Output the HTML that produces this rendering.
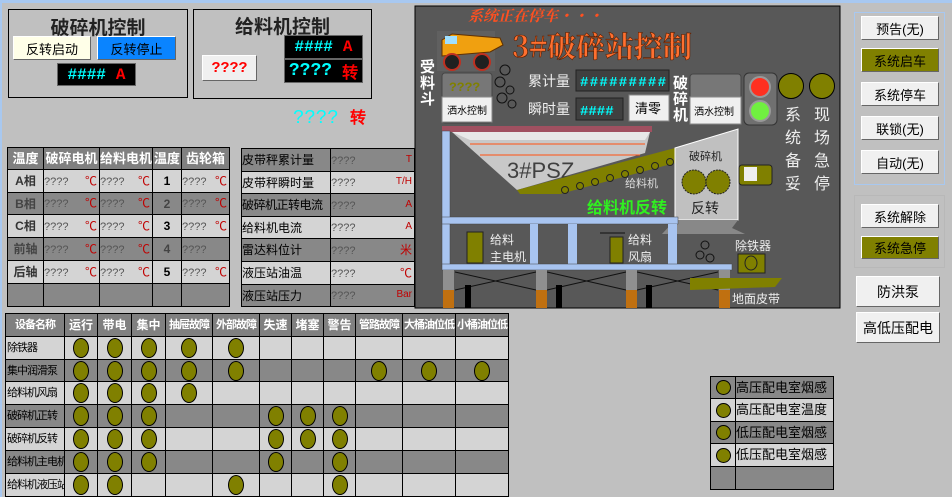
<!DOCTYPE html>
<html><head><meta charset="utf-8"><style>
*{margin:0;padding:0;box-sizing:border-box}
body{width:952px;height:497px;background:#c0c0c0;position:relative;overflow:hidden;font-family:"Liberation Sans","Noto Sans CJK SC","WenQuanYi Zen Hei",sans-serif;font-size:13px}
.a{position:absolute}
.box{position:absolute;border:1px solid #000}
.btn{position:absolute;display:flex;align-items:center;justify-content:center;border:1px solid;border-color:#fff #666 #666 #fff;background:#f0f0f0;font-size:13px;color:#000}
.disp{position:absolute;background:#000;border:1px solid #666;font-family:"Liberation Mono",monospace;font-weight:bold;display:flex;align-items:center;justify-content:center;gap:10px}
.cy{color:#00ffff}.rd{color:#ff0000}
table{border-collapse:collapse;position:absolute;table-layout:fixed}
td{border:1px solid #000;padding:0;font-size:12px;overflow:hidden;white-space:nowrap;line-height:14px}
.h td{background:#808080;color:#fff;font-weight:bold;text-align:center;font-size:13px}
.l td{background:#d4d4d4}.d td{background:#888}
.dot{display:inline-block;width:16px;height:20px;border-radius:50%;background:#808000;border:1px solid #000;vertical-align:middle}
.c{text-align:center}
.q{color:#555;font-size:11px}
.u{color:#c00000;font-size:12px;float:right;margin-right:2px}
.bt .h td{font-size:12px}
.bt .h td.k{font-size:11px;letter-spacing:-1px}
.bt td.n{text-align:left;padding-left:1px;font-size:11px;letter-spacing:-1px}
</style></head><body>
<div class="a" style="left:0;top:0;width:952px;height:3px;background:#a8c8f0"></div>
<div class="a" style="left:0;top:0;width:2px;height:497px;background:#a8c8f0"></div>

<div class="box" style="left:8px;top:9px;width:180px;height:89px"></div>
<div class="a" style="left:8px;top:13px;width:180px;text-align:center;font-size:19px;font-weight:bold;color:#222">破碎机控制</div>
<div class="btn" style="left:13px;top:36px;width:78px;height:24px;background:#ffffe8">反转启动</div>
<div class="btn" style="left:97px;top:36px;width:79px;height:24px;background:#0a84ff">反转停止</div>
<div class="disp" style="left:57px;top:63px;width:79px;height:23px;font-size:16px"><span class="cy">####</span><span class="rd">A</span></div>

<div class="box" style="left:193px;top:9px;width:179px;height:90px"></div>
<div class="a" style="left:193px;top:12px;width:179px;text-align:center;font-size:19px;font-weight:bold;color:#222">给料机控制</div>
<div class="btn" style="left:202px;top:55px;width:55px;height:26px;font-family:'Liberation Mono',monospace;font-weight:bold;color:#f00;font-size:15px">????</div>
<div class="disp" style="left:284px;top:35px;width:79px;height:24px;font-size:16px"><span class="cy">####</span><span class="rd">A</span></div>
<div class="disp" style="left:284px;top:59px;width:79px;height:24px;font-size:18px"><span class="cy">????</span><span class="rd" style="font-size:16px">转</span></div>
<div class="a" style="left:293px;top:104px;font-size:19px;font-family:'Liberation Mono',monospace"><span style="color:#00ffff">????</span> <span style="color:#f00;font-size:16px;font-weight:bold">转</span></div>

<table style="left:7px;top:147px;width:222px">
<colgroup><col style="width:36px"><col style="width:56px"><col style="width:53px"><col style="width:29px"><col style="width:48px"></colgroup>
<tr class="h" style="height:22px"><td>温度</td><td>破碎电机</td><td>给料电机</td><td>温度</td><td>齿轮箱</td></tr>
<tr class="l" style="height:23px"><td class="c" style="font-weight:bold;color:#333">A相</td><td><span class="q">????</span><span class="u">℃</span></td><td><span class="q">????</span><span class="u">℃</span></td><td class="c"><b>1</b></td><td><span class="q">????</span><span class="u">℃</span></td></tr>
<tr class="d" style="height:22px"><td class="c" style="font-weight:bold;color:#444">B相</td><td><span class="q">????</span><span class="u">℃</span></td><td><span class="q">????</span><span class="u">℃</span></td><td class="c" style="color:#444"><b>2</b></td><td><span class="q">????</span><span class="u">℃</span></td></tr>
<tr class="l" style="height:23px"><td class="c" style="font-weight:bold;color:#333">C相</td><td><span class="q">????</span><span class="u">℃</span></td><td><span class="q">????</span><span class="u">℃</span></td><td class="c"><b>3</b></td><td><span class="q">????</span><span class="u">℃</span></td></tr>
<tr class="d" style="height:23px"><td class="c" style="font-weight:bold;color:#444">前轴</td><td><span class="q">????</span><span class="u">℃</span></td><td><span class="q">????</span><span class="u">℃</span></td><td class="c" style="color:#444"><b>4</b></td><td><span class="q">????</span></td></tr>
<tr class="l" style="height:23px"><td class="c" style="font-weight:bold;color:#333">后轴</td><td><span class="q">????</span><span class="u">℃</span></td><td><span class="q">????</span><span class="u">℃</span></td><td class="c"><b>5</b></td><td><span class="q">????</span><span class="u">℃</span></td></tr>
<tr class="d" style="height:23px"><td></td><td></td><td></td><td></td><td></td></tr>
</table>

<table style="left:241px;top:148px;width:173px">
<colgroup><col style="width:89px"><col style="width:84px"></colgroup>
<tr class="d" style="height:23px"><td style="font-size:12px">皮带秤累计量</td><td><span class="q">????</span><span class="u" style="font-size:10px">T</span></td></tr>
<tr class="l" style="height:22px"><td style="font-size:12px">皮带秤瞬时量</td><td><span class="q">????</span><span class="u" style="font-size:10px">T/H</span></td></tr>
<tr class="d" style="height:23px"><td style="font-size:12px;letter-spacing:-0.5px">破碎机正转电流</td><td><span class="q">????</span><span class="u" style="font-size:10px">A</span></td></tr>
<tr class="l" style="height:22px"><td style="font-size:12px">给料机电流</td><td><span class="q">????</span><span class="u" style="font-size:10px">A</span></td></tr>
<tr class="d" style="height:23px"><td style="font-size:12px">雷达料位计</td><td><span class="q">????</span><span class="u">米</span></td></tr>
<tr class="l" style="height:23px"><td style="font-size:12px">液压站油温</td><td><span class="q">????</span><span class="u">℃</span></td></tr>
<tr class="d" style="height:22px"><td style="font-size:12px">液压站压力</td><td><span class="q">????</span><span class="u" style="font-size:10px">Bar</span></td></tr>
</table>

<svg class="a" style="left:0;top:0" width="952" height="497" viewBox="0 0 952 497">
<rect x="415" y="6" width="425" height="302" fill="#585858" stroke="#000"/>
<text x="468" y="21" font-size="15" font-weight="bold" fill="#ff5020" font-family="Noto Serif CJK SC,serif" font-style="italic">系统正在停车・・・</text>
<text x="512" y="57" font-size="29" font-weight="bold" fill="#ff7030" stroke="#602000" stroke-width="0.6" font-family="Noto Serif CJK SC,serif">3#破碎站控制</text>
<rect x="437" y="31" width="58" height="40" fill="#606060"/>
<polygon points="442,40 452,34 500,38 503,45 490,52 442,56" fill="#f0a010" stroke="#603000"/>
<rect x="445" y="36" width="12" height="8" fill="#a0e0ff"/>
<circle cx="452" cy="62" r="8" fill="#202020" stroke="#c03020" stroke-width="2"/>
<circle cx="482" cy="62" r="8" fill="#202020" stroke="#c03020" stroke-width="2"/>
<g fill="#fff" font-size="15" font-weight="bold"><text x="420" y="72">受</text><text x="420" y="88">料</text><text x="420" y="104">斗</text></g>
<g fill="none" stroke="#111" stroke-width="1"><circle cx="505" cy="70" r="5"/><circle cx="500" cy="82" r="5"/><circle cx="510" cy="90" r="4"/><circle cx="502" cy="98" r="5"/><circle cx="512" cy="104" r="4"/></g>
<rect x="442" y="73" width="50" height="50" rx="3" fill="#777" stroke="#444"/>
<text x="449" y="91" font-size="13" fill="#808000" font-family="Liberation Mono,monospace" font-weight="bold">????</text>
<rect x="442" y="97" width="50" height="25" fill="#f0f0f0" stroke="#888"/>
<text x="447" y="114" font-size="10" fill="#000">洒水控制</text>
<text x="528" y="86" font-size="14" fill="#eee">累计量</text>
<rect x="576" y="70" width="93" height="21" fill="#404040" stroke="#222"/>
<text x="580" y="86" font-size="14" font-weight="bold" fill="#00ffff" font-family="Liberation Mono,monospace" textLength="86">#########</text>
<text x="528" y="114" font-size="14" fill="#eee">瞬时量</text>
<rect x="576" y="98" width="47" height="22" fill="#404040" stroke="#222"/>
<text x="580" y="115" font-size="14" font-weight="bold" fill="#00ffff" font-family="Liberation Mono,monospace">####</text>
<rect x="629" y="95" width="40" height="26" fill="#f0f0f0" stroke="#888"/>
<text x="635" y="113" font-size="13" fill="#000">清零</text>
<g fill="#fff" font-size="15" font-weight="bold"><text x="673" y="88">破</text><text x="673" y="104">碎</text><text x="673" y="120">机</text></g>
<rect x="690" y="74" width="51" height="50" rx="3" fill="#777" stroke="#444"/>
<rect x="690" y="97" width="51" height="27" fill="#f0f0f0" stroke="#888"/>
<text x="694" y="115" font-size="10" fill="#000">洒水控制</text>
<rect x="744" y="73" width="33" height="52" rx="5" fill="#707070" stroke="#333"/>
<circle cx="760" cy="87" r="10" fill="#ff3020" stroke="#999" stroke-width="2"/>
<circle cx="760" cy="111" r="10" fill="#70f040" stroke="#999" stroke-width="2"/>
<circle cx="791" cy="86" r="12.5" fill="#808000" stroke="#000"/>
<circle cx="822" cy="86" r="12.5" fill="#808000" stroke="#000"/>
<g fill="#eee" font-size="16"><text x="785" y="120">系</text><text x="785" y="143">统</text><text x="785" y="166">备</text><text x="785" y="189">妥</text>
<text x="814" y="120">现</text><text x="814" y="143">场</text><text x="814" y="166">急</text><text x="814" y="189">停</text></g>
<rect x="442" y="126" width="210" height="6" fill="#a05060"/>
<polygon points="452,132 650,132 645,153 517,190" fill="#c8c8c8"/>
<polygon points="452,132 650,132 645,140 470,140" fill="#e8e8e8"/>
<g stroke="#ff5010" stroke-width="1"><line x1="470" y1="144" x2="645" y2="144"/><line x1="480" y1="155" x2="640" y2="155"/></g>
<text x="507" y="178" font-size="22" fill="#404040">3#PSZ</text>
<polygon points="517,190 675,148 675,163 560,194 520,194" fill="#808000"/>
<g fill="#808000" stroke="#222"><circle cx="565" cy="190" r="3.5"/><circle cx="580" cy="186" r="3.5"/><circle cx="595" cy="182" r="3.5"/><circle cx="610" cy="178" r="3.5"/><circle cx="625" cy="174" r="3.5"/><circle cx="640" cy="170" r="3.5"/><circle cx="655" cy="166" r="3.5"/><circle cx="670" cy="162" r="3.5"/></g>
<text x="625" y="187" font-size="11" fill="#ddd">给料机</text>
<text x="587" y="213" font-size="16" font-weight="bold" fill="#30f020">给料机反转</text>
<polygon points="675,148 738,129 738,220 675,220" fill="#c0c0c0" stroke="#fff"/>
<text x="689" y="160" font-size="11" fill="#222">破碎机</text>
<circle cx="694" cy="182" r="12" fill="#808000" stroke="#222" stroke-dasharray="2 1"/>
<circle cx="718" cy="182" r="12" fill="#808000" stroke="#222" stroke-dasharray="2 1"/>
<text x="691" y="213" font-size="14" fill="#222">反转</text>
<rect x="739" y="165" width="33" height="20" rx="3" fill="#808000" stroke="#222"/>
<rect x="744" y="167" width="13" height="14" fill="#eee"/>
<polygon points="675,220 738,220 732,228 745,234 662,234" fill="#888"/>
<rect x="442" y="131" width="8" height="136" fill="#a8c4f0" stroke="#444" stroke-width="0.5"/>
<rect x="442" y="217" width="236" height="7" fill="#a8c4f0" stroke="#444" stroke-width="0.5"/>
<rect x="530" y="224" width="8" height="40" fill="#a8c4f0"/>
<rect x="568" y="224" width="9" height="40" fill="#a8c4f0"/>
<rect x="668" y="224" width="9" height="40" fill="#a8c4f0"/>
<rect x="442" y="264" width="290" height="6" fill="#a8c4f0" stroke="#444" stroke-width="0.5"/>
<rect x="467" y="232" width="16" height="31" fill="#808000" stroke="#222"/>
<text x="490" y="244" font-size="12" fill="#eee">给料</text><text x="490" y="261" font-size="12" fill="#eee">主电机</text>
<rect x="610" y="237" width="13" height="26" fill="#808000" stroke="#222"/><line x1="600" y1="233" x2="625" y2="233" stroke="#111"/>
<text x="628" y="244" font-size="12" fill="#eee">给料</text><text x="628" y="261" font-size="12" fill="#eee">风扇</text>
<g stroke="#111" stroke-width="1"><line x1="455" y1="272" x2="536" y2="290"/><line x1="455" y1="290" x2="536" y2="272"/><line x1="547" y1="272" x2="626" y2="290"/><line x1="547" y1="290" x2="626" y2="272"/><line x1="637" y1="272" x2="718" y2="290"/><line x1="637" y1="290" x2="718" y2="272"/></g>
<g fill="#000"><rect x="465" y="285" width="6" height="23"/><rect x="556" y="285" width="6" height="23"/><rect x="646" y="285" width="6" height="23"/></g>
<g><rect x="443" y="270" width="11" height="38" fill="#909090"/><rect x="443" y="290" width="11" height="18" fill="#c07010"/>
<rect x="536" y="270" width="11" height="38" fill="#909090"/><rect x="536" y="290" width="11" height="18" fill="#c07010"/>
<rect x="626" y="270" width="11" height="38" fill="#909090"/><rect x="626" y="290" width="11" height="18" fill="#c07010"/>
<rect x="719" y="270" width="11" height="38" fill="#909090"/><rect x="719" y="290" width="11" height="18" fill="#c07010"/></g>
<g fill="none" stroke="#111"><circle cx="705" cy="245" r="4"/><circle cx="700" cy="255" r="4"/><circle cx="710" cy="258" r="4"/></g>
<text x="735" y="250" font-size="12" fill="#eee">除铁器</text>
<rect x="738" y="254" width="27" height="19" fill="#808000" stroke="#222"/><ellipse cx="751" cy="263" rx="6" ry="7" fill="none" stroke="#222"/>
<polygon points="690,278 782,278 775,287 690,290" fill="#808000"/>
<text x="732" y="303" font-size="12" fill="#eee">地面皮带</text>
</svg>

<div class="a" style="left:854px;top:12px;width:91px;height:173px;border:1px solid #a8c8f0"></div>
<div class="btn" style="left:861px;top:16px;width:78px;height:24px">预告(无)</div>
<div class="btn" style="left:861px;top:48px;width:78px;height:24px;background:#808000">系统启车</div>
<div class="btn" style="left:861px;top:82px;width:78px;height:24px">系统停车</div>
<div class="btn" style="left:861px;top:116px;width:78px;height:24px">联锁(无)</div>
<div class="btn" style="left:861px;top:150px;width:78px;height:24px">自动(无)</div>
<div class="a" style="left:854px;top:195px;width:91px;height:73px;border:1px solid #b8b8b8"></div>
<div class="btn" style="left:861px;top:204px;width:78px;height:24px">系统解除</div>
<div class="btn" style="left:861px;top:236px;width:78px;height:23px;background:#808000">系统急停</div>
<div class="btn" style="left:856px;top:276px;width:84px;height:31px;font-size:14px">防洪泵</div>
<div class="btn" style="left:856px;top:312px;width:84px;height:31px;font-size:14px">高低压配电</div>

<table class="bt" style="left:5px;top:313px;width:503px">
<colgroup><col style="width:59px"><col style="width:33px"><col style="width:34px"><col style="width:34px"><col style="width:47px"><col style="width:47px"><col style="width:32px"><col style="width:32px"><col style="width:32px"><col style="width:47px"><col style="width:53px"><col style="width:53px"></colgroup>
<tr class="h" style="height:23px"><td class="k">设备名称</td><td>运行</td><td>带电</td><td>集中</td><td class="k">抽屉故障</td><td class="k">外部故障</td><td>失速</td><td>堵塞</td><td>警告</td><td class="k">管路故障</td><td class="k">大桶油位低</td><td class="k">小桶油位低</td></tr>
<tr class="l c" style="height:23px"><td class="n">除铁器</td><td><i class="dot"></i></td><td><i class="dot"></i></td><td><i class="dot"></i></td><td><i class="dot"></i></td><td><i class="dot"></i></td><td></td><td></td><td></td><td></td><td></td><td></td></tr>
<tr class="d c" style="height:22px"><td class="n">集中润滑泵</td><td><i class="dot"></i></td><td><i class="dot"></i></td><td><i class="dot"></i></td><td><i class="dot"></i></td><td><i class="dot"></i></td><td></td><td></td><td></td><td><i class="dot"></i></td><td><i class="dot"></i></td><td><i class="dot"></i></td></tr>
<tr class="l c" style="height:23px"><td class="n">给料机风扇</td><td><i class="dot"></i></td><td><i class="dot"></i></td><td><i class="dot"></i></td><td><i class="dot"></i></td><td></td><td></td><td></td><td></td><td></td><td></td><td></td></tr>
<tr class="d c" style="height:23px"><td class="n">破碎机正转</td><td><i class="dot"></i></td><td><i class="dot"></i></td><td><i class="dot"></i></td><td></td><td></td><td><i class="dot"></i></td><td><i class="dot"></i></td><td><i class="dot"></i></td><td></td><td></td><td></td></tr>
<tr class="l c" style="height:23px"><td class="n">破碎机反转</td><td><i class="dot"></i></td><td><i class="dot"></i></td><td><i class="dot"></i></td><td></td><td></td><td><i class="dot"></i></td><td><i class="dot"></i></td><td><i class="dot"></i></td><td></td><td></td><td></td></tr>
<tr class="d c" style="height:23px"><td class="n">给料机主电机</td><td><i class="dot"></i></td><td><i class="dot"></i></td><td><i class="dot"></i></td><td></td><td></td><td><i class="dot"></i></td><td></td><td><i class="dot"></i></td><td></td><td></td><td></td></tr>
<tr class="l c" style="height:23px"><td class="n">给料机液压站</td><td><i class="dot"></i></td><td><i class="dot"></i></td><td></td><td></td><td><i class="dot"></i></td><td></td><td></td><td><i class="dot"></i></td><td></td><td></td><td></td></tr>
</table>

<table style="left:710px;top:376px;width:123px">
<colgroup><col style="width:25px"><col style="width:98px"></colgroup>
<tr class="d c" style="height:22px"><td><i class="dot" style="width:15px;height:15px"></i></td><td style="text-align:left;font-size:13px">高压配电室烟感</td></tr>
<tr class="l c" style="height:23px"><td><i class="dot" style="width:15px;height:15px"></i></td><td style="text-align:left;font-size:13px">高压配电室温度</td></tr>
<tr class="d c" style="height:22px"><td><i class="dot" style="width:15px;height:15px"></i></td><td style="text-align:left;font-size:13px">低压配电室烟感</td></tr>
<tr class="l c" style="height:23px"><td><i class="dot" style="width:15px;height:15px"></i></td><td style="text-align:left;font-size:13px">低压配电室烟感</td></tr>
<tr class="d" style="height:23px"><td></td><td></td></tr>
</table>
</body></html>
